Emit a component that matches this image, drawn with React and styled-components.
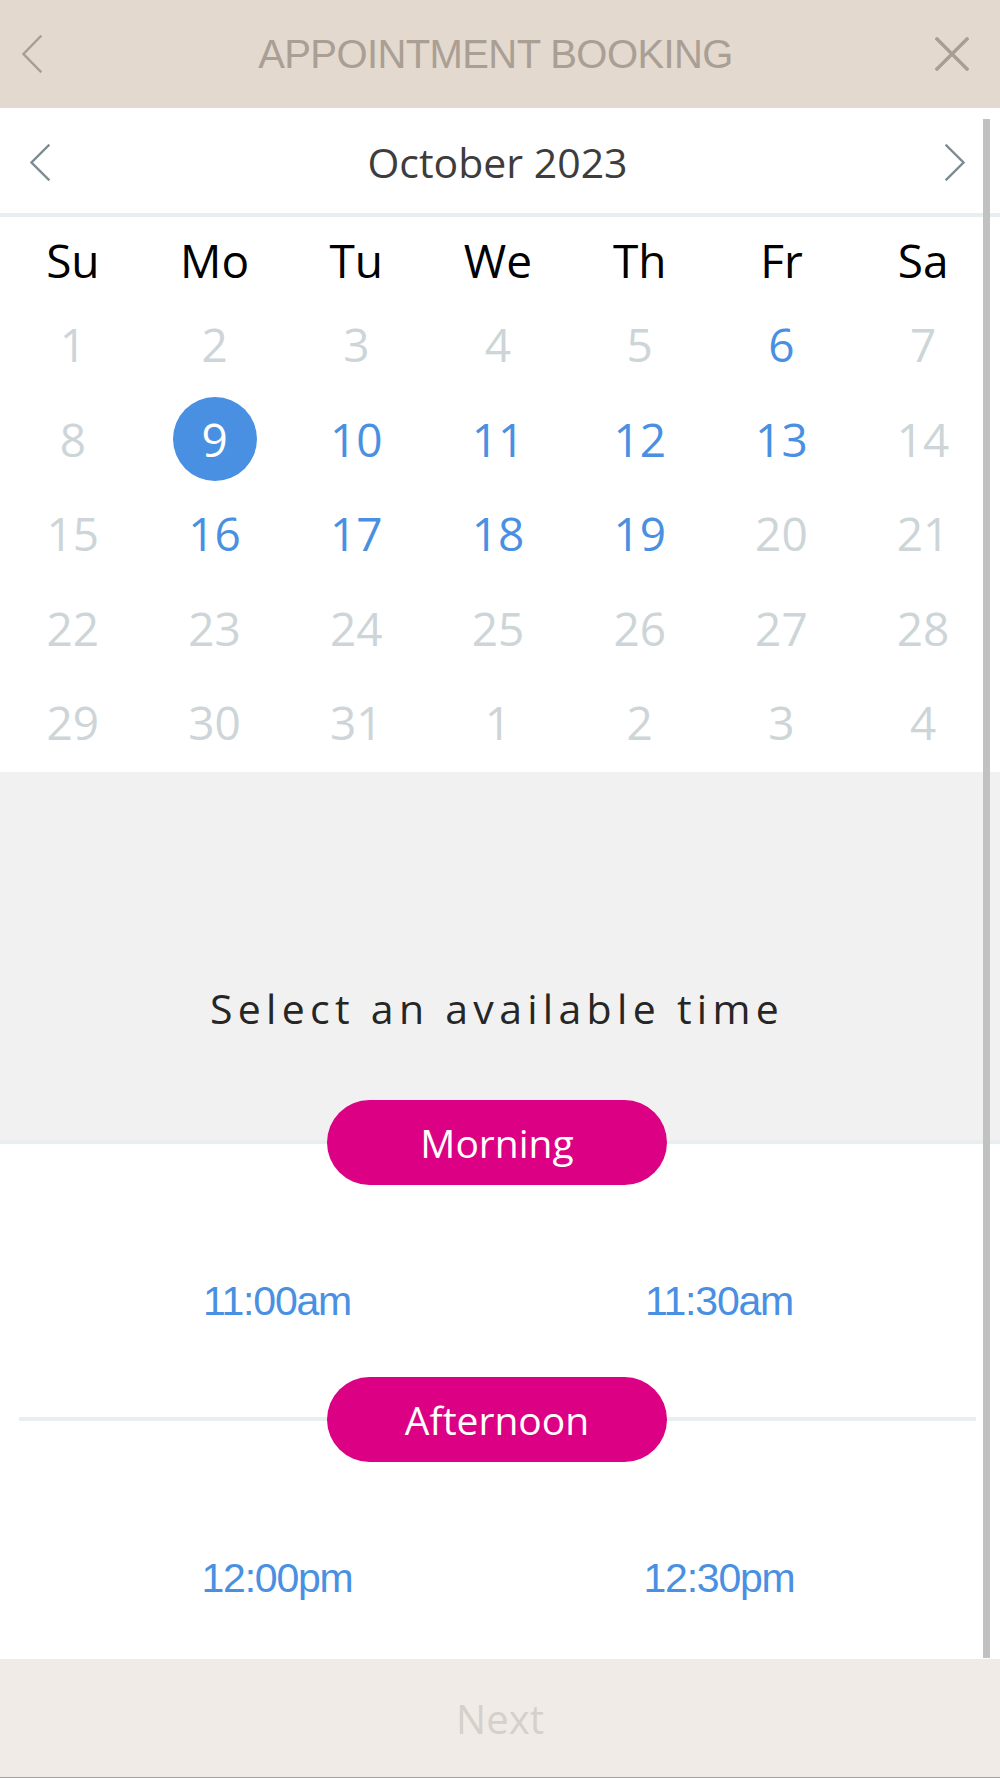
import React, { useState } from 'react';
import styled, { createGlobalStyle } from 'styled-components';

const GlobalStyle = createGlobalStyle`
    * { box-sizing: border-box; }
    html, body {
        margin: 0;
        padding: 0;
        background: #ffffff;
    }
    body {
        font-family: "Open Sans", "DejaVu Sans", sans-serif;
    }
`

const Page = styled.div`
    width: 1000px;
    height: 1778px;
    display: flex;
    flex-direction: column;
    overflow: hidden;
`

const Header = styled.header`
    height: 108px;
    flex-shrink: 0;
    background-color: #e3d9cf;
    display: grid;
    grid-template-columns: 1fr auto 1fr;
    align-items: center;
    padding: 0 31px 0 22px;
`

const HeaderTitle = styled.h1`
    margin: 0;
    font-family: "Liberation Sans", Arial, sans-serif;
    font-weight: 400;
    font-size: 40px;
    letter-spacing: -0.6px;
    color: #aa9f94;
    line-height: 1;
`

const IconButton = styled.button`
    border: none;
    background: none;
    padding: 0;
    margin: 0;
    display: flex;
    cursor: pointer;
    justify-self: ${props => props.end ? 'end' : 'start'};
`

const Body = styled.main`
    flex: 1;
    min-height: 0;
    position: relative;
    overflow: hidden;
`

const ScrollThumb = styled.div`
    position: absolute;
    top: 11px;
    bottom: 1px;
    right: 10px;
    width: 7px;
    background-color: #c1c1c1;
`

const MonthNav = styled.div`
    height: 105px;
    display: grid;
    grid-template-columns: 1fr auto 1fr;
    align-items: center;
    padding: 4px 35px 0 30px;
`

const MonthLabel = styled.h2`
    margin: 0;
    font-weight: 400;
    font-size: 41px;
    color: #3d3d3d;
    line-height: 1;
`

const Divider = styled.div`
    height: 4px;
    background-color: #e9eef0;
`

const CalendarGrid = styled.div`
    display: grid;
    grid-template-columns: repeat(7, 1fr);
    grid-template-rows: 80px;
    grid-auto-rows: 94.5px;
    padding: 0 6px 2.5px 2px;
`

const WeekDay = styled.div`
    padding-top: 5px;
    display: flex;
    align-items: center;
    justify-content: center;
    font-size: 46px;
    line-height: 1;
    color: #000000;
`

const DayCell = styled.div`
    display: flex;
    align-items: center;
    justify-content: center;
`

const DayNumber = styled.span`
    width: 84px;
    height: 84px;
    border-radius: 50%;
    display: flex;
    align-items: center;
    justify-content: center;
    font-size: 46px;
    line-height: 1;
    color: ${props => props.selected ? '#ffffff' : props.available ? '#4a90e2' : '#cdd5d8'};
    background-color: ${props => props.selected ? '#4a90e2' : 'transparent'};
    cursor: ${props => props.available ? 'pointer' : 'default'};
`

const PromptSection = styled.section`
    background-color: #f1f1f1;
    padding: 209px 6px 64px 0;
    text-align: center;
`

const Prompt = styled.p`
    margin: 0;
    font-size: 41px;
    line-height: 55px;
    letter-spacing: 5.3px;
    color: #262626;
`

const GroupHeader = styled.div`
    position: relative;
    height: 85px;
    display: flex;
    justify-content: center;
    padding-right: 6px;
    background: ${props => props.shaded ? 'linear-gradient(to bottom, #f1f1f1 50%, #ffffff 50%)' : '#ffffff'};

    &::before {
        content: "";
        position: absolute;
        left: ${props => props.shaded ? '0' : '19px'};
        right: ${props => props.shaded ? '0' : '24px'};
        top: 40px;
        height: 4px;
        background-color: #e9eef0;
    }
`

const Pill = styled.div`
    position: relative;
    z-index: 1;
    width: 340px;
    height: 85px;
    border-radius: 43px;
    background-color: #dc0084;
    color: #ffffff;
    font-size: 39px;
    display: flex;
    align-items: center;
    justify-content: center;
`

const SlotRow = styled.div`
    display: grid;
    grid-template-columns: 1fr 1fr;
    padding: 91px 60px 51px 56px;
`

const Slot = styled.button`
    border: none;
    background: none;
    padding: 0;
    font-family: "Liberation Sans", Arial, sans-serif;
    font-size: 41px;
    line-height: 50px;
    letter-spacing: -1.2px;
    color: #4a90e2;
    text-align: center;
    cursor: pointer;
`

const Footer = styled.footer`
    height: 119px;
    flex-shrink: 0;
    background-color: #f0ebe7;
    border-bottom: 1px solid #a3a3a3;
    display: flex;
    align-items: center;
    justify-content: center;
`

const NextButton = styled.button`
    border: none;
    background: none;
    font-family: "Open Sans", sans-serif;
    font-size: 40px;
    color: #d6d0cb;
    padding: 0;
`

const Chevron = ({ dir, color, w, h, stroke }) => (
    <svg width={w} height={h} viewBox={`0 0 ${w} ${h}`} fill="none">
        <polyline
            points={dir === 'left'
                ? `${w - 1.5},1.5 1.5,${h / 2} ${w - 1.5},${h - 1.5}`
                : `1.5,1.5 ${w - 1.5},${h / 2} 1.5,${h - 1.5}`}
            stroke={color}
            strokeWidth={stroke}
            strokeLinecap="square"
        />
    </svg>
)

const CloseIcon = () => (
    <svg width="34" height="34" viewBox="0 0 34 34" fill="none">
        <path d="M2 2 L32 32 M32 2 L2 32" stroke="#a99e93" strokeWidth="3.4" strokeLinecap="square" />
    </svg>
)

const weekDays = ['Su', 'Mo', 'Tu', 'We', 'Th', 'Fr', 'Sa']

// October 2023 starts on a Sunday; trailing days from November
const days = [
    ...Array.from({ length: 31 }, (_, i) => ({ day: i + 1, current: true })),
    ...[1, 2, 3, 4].map(d => ({ day: d, current: false })),
]

const availableDays = [6, 9, 10, 11, 12, 13, 16, 17, 18, 19]

const groups = [
    { name: 'Morning', slots: ['11:00am', '11:30am'] },
    { name: 'Afternoon', slots: ['12:00pm', '12:30pm'] },
]

const App = () => {
    const [selected, setSelected] = useState(9)

    return (
        <Page>
            <GlobalStyle />
            <Header>
                <IconButton>
                    <Chevron dir="left" color="#a99e93" w={20} h={38} stroke={2.4} />
                </IconButton>
                <HeaderTitle>APPOINTMENT BOOKING</HeaderTitle>
                <IconButton end>
                    <CloseIcon />
                </IconButton>
            </Header>

            <Body>
                <MonthNav>
                    <IconButton>
                        <Chevron dir="left" color="#7d8c91" w={20} h={37} stroke={2.4} />
                    </IconButton>
                    <MonthLabel>October 2023</MonthLabel>
                    <IconButton end>
                        <Chevron dir="right" color="#7d8c91" w={20} h={37} stroke={2.4} />
                    </IconButton>
                </MonthNav>
                <Divider />

                <CalendarGrid>
                    {weekDays.map(d => <WeekDay key={d}>{d}</WeekDay>)}
                    {days.map((d, i) => {
                        const isSelected = d.current && d.day === selected
                        const isAvailable = d.current && availableDays.includes(d.day)
                        return (
                            <DayCell key={i}>
                                <DayNumber
                                    selected={isSelected}
                                    available={isAvailable}
                                    onClick={() => isAvailable && setSelected(d.day)}
                                >
                                    {d.day}
                                </DayNumber>
                            </DayCell>
                        )
                    })}
                </CalendarGrid>

                <PromptSection>
                    <Prompt>Select an available time</Prompt>
                </PromptSection>

                {groups.map((g, i) => (
                    <React.Fragment key={g.name}>
                        <GroupHeader shaded={i === 0}>
                            <Pill>{g.name}</Pill>
                        </GroupHeader>
                        <SlotRow>
                            {g.slots.map(s => <Slot key={s}>{s}</Slot>)}
                        </SlotRow>
                    </React.Fragment>
                ))}

                <ScrollThumb />
            </Body>

            <Footer>
                <NextButton disabled>Next</NextButton>
            </Footer>
        </Page>
    )
}

export default App;
